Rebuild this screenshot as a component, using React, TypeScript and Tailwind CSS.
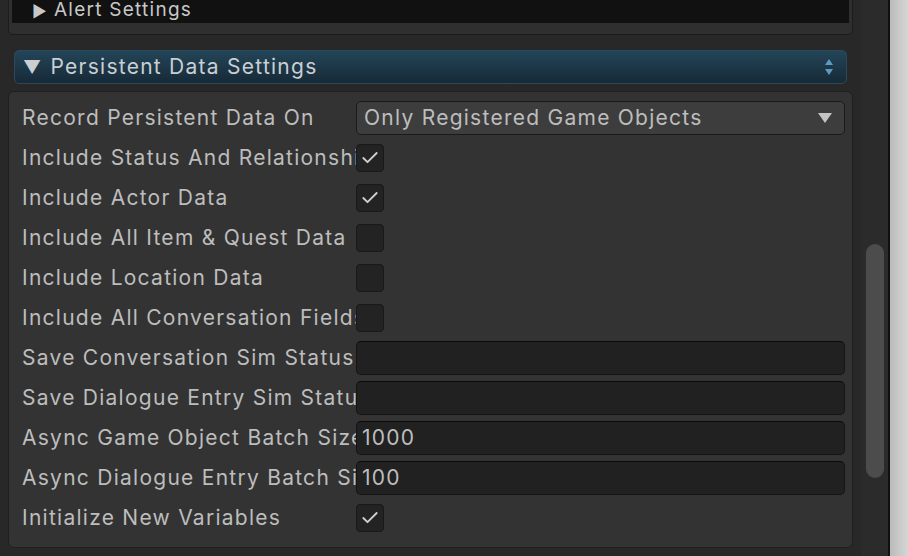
import { Check } from "lucide-react";

type Row = { label: string; kind: "check" | "empty" | "text" | "select"; on?: boolean; value?: string };

const ROWS: Row[] = [
  { label: "Record Persistent Data On", kind: "select", value: "Only Registered Game Objects" },
  { label: "Include Status And Relationship Data", kind: "check", on: true },
  { label: "Include Actor Data", kind: "check", on: true },
  { label: "Include All Item & Quest Data", kind: "check" },
  { label: "Include Location Data", kind: "check" },
  { label: "Include All Conversation Fields", kind: "check" },
  { label: "Save Conversation Sim Status", kind: "text", value: "" },
  { label: "Save Dialogue Entry Sim Status", kind: "text", value: "" },
  { label: "Async Game Object Batch Size", kind: "text", value: "1000" },
  { label: "Async Dialogue Entry Batch Size", kind: "text", value: "100" },
  { label: "Initialize New Variables", kind: "check", on: true },
];

function Field({ row }: { row: Row }) {
  if (row.kind === "check")
    return (
      <div className="grid h-[28px] w-[28px] place-items-center rounded-[4px] border border-[#191919] bg-[#232323]">
        {row.on && <Check className="h-5 w-5 text-[#d0d0d0]" strokeWidth={2.2} />}
      </div>
    );
  if (row.kind === "select")
    return (
      <div className="flex h-[34px] flex-1 items-center justify-between rounded-[5px] border border-[#1a1a1a] bg-[#3d3d3d] pl-[7px] pr-[12px]">
        <span>{row.value}</span>
        <svg width="14" height="10" viewBox="0 0 14 10"><path d="M0 0h14L7 10z" fill="#c4c4c4" /></svg>
      </div>
    );
  return (
    <div className="flex h-[34px] flex-1 items-center rounded-[5px] border border-[#141414] border-t-[#0b0b0b] bg-[#212121] pl-[5px]">
      {row.value}
    </div>
  );
}

export default function App() {
  return (
    <div
      className="flex h-[556px] w-[908px] overflow-hidden bg-[#282828] text-[21px] tracking-[0.06em] text-[#bdbdbd]"
      style={{ fontFamily: "Inter, 'Noto Sans', sans-serif" }}
    >
      <div className="flex w-[862px] flex-col pl-[8px] pr-[9px]">
        <div className="-mt-[4px] rounded-b-[5px] border border-[#1c1c1c] bg-[#2f2f2f] px-[3px] pb-[11px]">
          <div className="flex h-[26px] items-center gap-[6px] bg-[#111] pl-[20px] pt-[1px] text-[19px] text-[#c8c8c8]">
            <span className="text-[16px]">▶</span>Alert Settings
          </div>
        </div>
        <div className="mx-[6px] mt-[15px] flex h-[34px] items-center justify-between rounded-[5px] border border-[#2a4a5c] bg-gradient-to-b from-[#234558] to-[#172a38] pl-[8px] pr-[12px]">
          <span className="flex items-center gap-[8px] text-[#c9cfd3]">
            <span className="text-[18px]">▼</span>Persistent Data Settings
          </span>
          <svg width="10" height="18" viewBox="0 0 10 18">
            <path d="M5 1l4 6H1z M1 11h8l-4 6z" fill="#5a9cc0" />
          </svg>
        </div>
        <div className="mt-[7px] flex flex-col gap-[6px] rounded-[6px] border border-[#1f1f1f] bg-[#333] pb-[12px] pl-[13px] pr-[7px] pt-[9px]">
          {ROWS.map((r) => (
            <div key={r.label} className="flex h-[34px] items-center">
              <div className="w-[334px] shrink-0 overflow-hidden whitespace-nowrap">{r.label}</div>
              <Field row={r} />
            </div>
          ))}
        </div>
      </div>
      <div className="flex w-[26px] flex-col bg-[#2b2b2b] pt-[244px]">
        <div className="mx-[4px] h-[234px] rounded-[10px] bg-[#4c4c4c]" />
      </div>
      <div className="w-[20px] border-l-2 border-[#111] bg-gradient-to-r from-[#bbb] to-[#d6d6d6]" />
    </div>
  );
}
